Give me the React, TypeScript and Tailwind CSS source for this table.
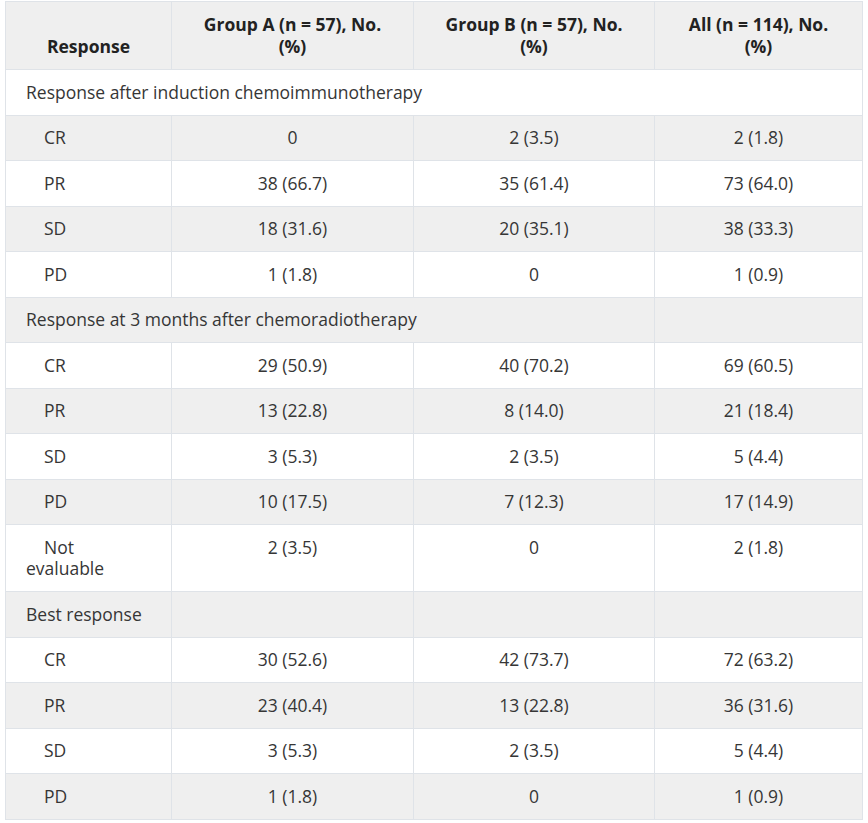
import React from "react";

type Row =
  | { kind: "section"; label: string; span: number }
  | { kind: "data"; label: string; a: string; b: string; all: string; top?: boolean };

const rows: Row[] = [
  { kind: "section", label: "Response after induction chemoimmunotherapy", span: 4 },
  { kind: "data", label: "CR", a: "0", b: "2 (3.5)", all: "2 (1.8)" },
  { kind: "data", label: "PR", a: "38 (66.7)", b: "35 (61.4)", all: "73 (64.0)" },
  { kind: "data", label: "SD", a: "18 (31.6)", b: "20 (35.1)", all: "38 (33.3)" },
  { kind: "data", label: "PD", a: "1 (1.8)", b: "0", all: "1 (0.9)" },
  { kind: "section", label: "Response at 3 months after chemoradiotherapy", span: 3 },
  { kind: "data", label: "CR", a: "29 (50.9)", b: "40 (70.2)", all: "69 (60.5)" },
  { kind: "data", label: "PR", a: "13 (22.8)", b: "8 (14.0)", all: "21 (18.4)" },
  { kind: "data", label: "SD", a: "3 (5.3)", b: "2 (3.5)", all: "5 (4.4)" },
  { kind: "data", label: "PD", a: "10 (17.5)", b: "7 (12.3)", all: "17 (14.9)" },
  { kind: "data", label: "Not evaluable", a: "2 (3.5)", b: "0", all: "2 (1.8)", top: true },
  { kind: "section", label: "Best response", span: 1 },
  { kind: "data", label: "CR", a: "30 (52.6)", b: "42 (73.7)", all: "72 (63.2)" },
  { kind: "data", label: "PR", a: "23 (40.4)", b: "13 (22.8)", all: "36 (31.6)" },
  { kind: "data", label: "SD", a: "3 (5.3)", b: "2 (3.5)", all: "5 (4.4)" },
  { kind: "data", label: "PD", a: "1 (1.8)", b: "0", all: "1 (0.9)" },
];

const cell = "border border-[#dfe3e8] px-5 py-[11.5px] leading-[21.5px]";
const th = "border border-[#dfe3e8] px-4 py-3 leading-[21.5px] font-bold text-[#222] text-center align-bottom";

export default function App() {
  return (
    <div className="min-h-screen bg-white pl-[5px] pt-px font-['Open_Sans',sans-serif] text-[17.5px] text-[#363636]">
      <table className="w-[858px] table-fixed border-collapse">
        <colgroup>
          <col className="w-[166px]" />
          <col className="w-[242px]" />
          <col className="w-[241px]" />
          <col />
        </colgroup>
        <thead>
          <tr className="bg-[#efefef]">
            <th className={th}>Response</th>
            <th className={th}>
              Group A (n = 57), No.
              <br />
              (%)
            </th>
            <th className={th}>
              Group B (n = 57), No.
              <br />
              (%)
            </th>
            <th className={th}>
              All (n = 114), No.
              <br />
              (%)
            </th>
          </tr>
        </thead>
        <tbody>
          {rows.map((r, i) => {
            const bg = i % 2 === 0 ? "bg-white" : "bg-[#efefef]";
            if (r.kind === "section") {
              return (
                <tr key={i} className={bg}>
                  <td colSpan={r.span} className={cell}>
                    {r.label}
                  </td>
                  {Array.from({ length: 4 - r.span }).map((_, j) => (
                    <td key={j} className={cell}></td>
                  ))}
                </tr>
              );
            }
            const v = r.top ? "align-top" : "align-middle";
            return (
              <tr key={i} className={bg}>
                <td className={`${cell} ${v} indent-[18px]`}>
                  {r.label === "Not evaluable" ? (
                    <>
                      Not
                      <br />
                      evaluable
                    </>
                  ) : (
                    r.label
                  )}
                </td>
                <td className={`${cell} ${v} text-center`}>{r.a}</td>
                <td className={`${cell} ${v} text-center`}>{r.b}</td>
                <td className={`${cell} ${v} text-center`}>{r.all}</td>
              </tr>
            );
          })}
        </tbody>
      </table>
    </div>
  );
}
